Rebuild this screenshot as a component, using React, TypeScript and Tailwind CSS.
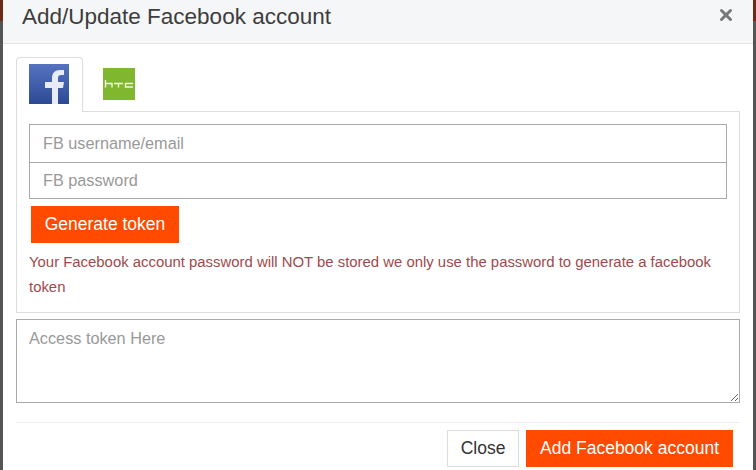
import { X } from 'lucide-react'

const FONT = "font-['Liberation_Sans',Arial,sans-serif]"

const FacebookIcon = () => (
  <svg width="40" height="40" viewBox="0 0 40 40" className="block">
    <defs>
      <linearGradient id="fbBg" x1="0" y1="0" x2="0" y2="1">
        <stop offset="0" stopColor="#5673c0" />
        <stop offset="1" stopColor="#2c4a94" />
      </linearGradient>
    </defs>
    <rect width="40" height="40" fill="url(#fbBg)" />
    <path d="M23 40V24h-7v-6h7v-4c0-5 3-8 8-8h4v5h-3c-2 0-3 1-3 3v4h6l-1 6h-5v16z" fill="#e6ebf6" />
  </svg>
)

const HtcIcon = () => (
  <svg width="32" height="32" viewBox="0 0 32 32" className="block">
    <rect width="32" height="32" fill="#7fb82e" />
    <path
      d="M2.5 12v7.5M2.5 15.5h6.5v4M11 15.5h9M15.5 15.5v4M30 15.5h-7.5v3.5H30"
      fill="none"
      stroke="#f0f7e4"
      strokeWidth="1.4"
    />
  </svg>
)

const SideStrip = () => (
  <div className="flex h-full w-[3px] shrink-0 flex-col bg-[#555]">
    <div className="h-[21px] bg-[#6e2a12]" />
  </div>
)

export default function App() {
  return (
    <div className={`${FONT} flex h-[470px] w-[756px] overflow-hidden bg-[#555]`}>
      <SideStrip />
      <div className="flex h-full min-w-0 flex-1 flex-col bg-white text-[#333]">
        <div className="flex h-[44px] shrink-0 items-start justify-between border-b border-[#e5e5e5] bg-[#f5f6f7] pl-[19px] pr-[18px]">
          <h4 className="text-[22.5px] leading-[33px] text-[#3d3d3d]">Add/Update Facebook account</h4>
          <X size={18} strokeWidth={4} className="mt-[6px] text-[#777]" />
        </div>

        <div className="flex flex-col px-[13px] pt-[13px]">
          <div className="flex h-[55px] items-start">
            <div className="relative z-10 h-[55px] w-[67px] rounded-t-[4px] border border-b-0 border-[#ddd] bg-white pl-[12px] pt-[6px]">
              <FacebookIcon />
            </div>
            <div className="ml-[20px] pt-[11px]">
              <HtcIcon />
            </div>
          </div>

          <div className="-mt-px flex h-[202px] flex-col border border-[#ddd] px-[12px] pt-[12px]">
            <input
              placeholder="FB username/email"
              className="h-[39px] w-full border border-[#aaa] px-[13px] text-[16.25px] text-[#333] outline-none placeholder:text-[#999]"
            />
            <input
              placeholder="FB password"
              className="h-[36px] w-full border border-t-0 border-[#aaa] px-[13px] text-[16.25px] text-[#333] outline-none placeholder:text-[#999]"
            />
            <button className="ml-[2px] mt-[7px] h-[37px] w-[148px] bg-[#ff4a00] text-[17.5px] text-white">
              Generate token
            </button>
            <p className="mt-[7px] text-[14.9px] leading-[25px] text-[#a04a4c]">
              Your Facebook account password will NOT be stored we only use the password to generate a facebook token
            </p>
          </div>

          <textarea
            placeholder="Access token Here"
            className="mt-[6px] h-[84px] w-full border border-[#aaa] px-[12px] py-[7px] text-[16.25px] leading-[22px] text-[#333] outline-none placeholder:text-[#999]"
          />
        </div>

        <div className="mx-[13px] mt-[19px] flex justify-end gap-[7px] border-t border-[#eee] pr-[7px] pt-[7px]">
          <button className="h-[37px] w-[72px] border border-[#ddd] bg-white text-[17.5px] text-[#333]">Close</button>
          <button className="h-[37px] w-[207px] bg-[#ff4a00] text-[17.5px] text-white">Add Facebook account</button>
        </div>
      </div>
      <SideStrip />
    </div>
  )
}
